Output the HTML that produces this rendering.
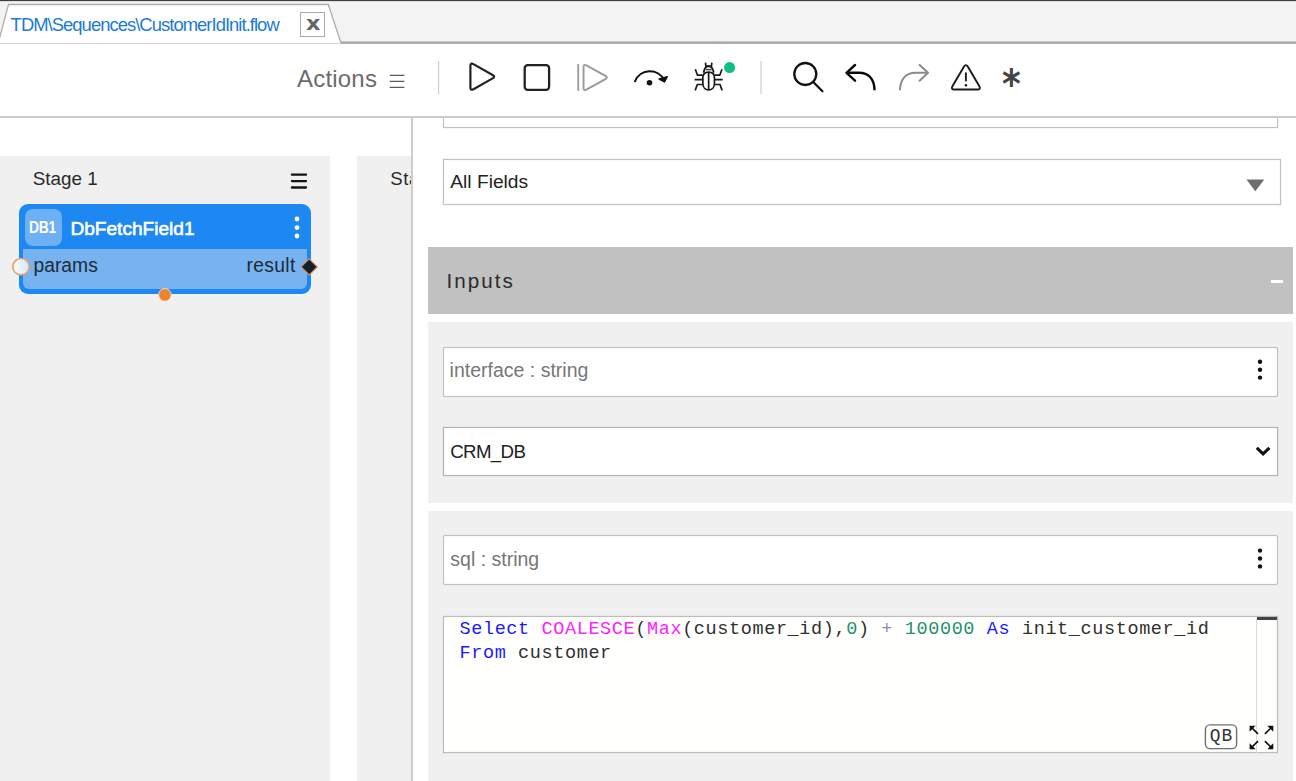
<!DOCTYPE html>
<html lang="en">
<head>
<meta charset="utf-8">
<title>TDM Sequences CustomerIdInit.flow</title>
<style>
*{box-sizing:border-box;margin:0;padding:0}
html,body{width:1296px;height:781px;overflow:hidden;background:#fff}
body{position:relative;font-family:"Liberation Sans",sans-serif;color:#222}
.abs{position:absolute}
.t{position:absolute;white-space:nowrap;line-height:1}
/* tab strip */
#topline{left:0;top:0;width:1296px;height:1px;background:#3e3e40}
#topline2{left:0;top:1px;width:1296px;height:1px;background:#dedede}
#tabbar{left:0;top:2px;width:1296px;height:41px;background:#f3f3f3}
#tabsvg{left:0;top:0}
#tabtxt{left:10.6px;top:15.8px;font-size:18.4px;color:#1a7bd7;letter-spacing:-0.95px}
#closex{left:300px;top:12px;width:25px;height:25px;border:1px solid #a9a9a9;background:#fff}
/* toolbar */
#toolbar{left:0;top:44px;width:1296px;height:73px;background:#fff}
#tbline{left:0;top:116px;width:1296px;height:2px;background:#cbcbcb;z-index:5}
#actions{left:297px;top:67px;font-size:24px;color:#6b6b6b;letter-spacing:0.2px}
#icons{left:0;top:44px}
/* left canvas */
.stage{background:#f0f0f0;top:156px;height:625px}
#stage1{left:0;width:330px}
#stage2{left:357px;width:55px}
#vdiv{left:411px;top:117px;width:2px;height:664px;background:#cdcdcd}
.stxt{font-size:18.6px;color:#2a2a2a}
#node{left:19px;top:204px;width:292px;height:89.5px;border-radius:9px;background:#1e88f2}
#nodebody{left:23px;top:249px;width:284px;height:40px;background:#76b3f0;border-radius:0 0 6px 6px}
#badge{left:25.4px;top:209.4px;width:36.5px;height:36.5px;border-radius:8px;background:#6db0f6}
#badgetxt{left:28.9px;top:220.1px;font-size:16.8px;font-weight:700;color:#fff;letter-spacing:-0.4px;transform:scaleX(0.83);transform-origin:0 0}
#nodetitle{left:70.4px;top:219px;font-size:19.1px;font-weight:400;color:#fff;-webkit-text-stroke:0.6px #fff;letter-spacing:0px}
#params{left:33.5px;top:255.6px;font-size:19.3px;color:#1f2a36}
#result{left:246.6px;top:256.2px;font-size:19.3px;color:#1f2a36;letter-spacing:0.3px}
/* right panel */
.box{background:#fff;border:1px solid #c2c2c2;box-shadow:0 0 1px rgba(0,0,0,0.22),inset 0 0 1px rgba(0,0,0,0.22)}
.sec{background:#f0f0f0;left:428px;width:865px}
#hdr{left:428px;top:247px;width:865px;height:67px;background:#c1c1c1}
#hdrtxt{left:446.4px;top:271.2px;font-size:20.6px;letter-spacing:2.05px;color:#2a2a2a}
.lbl{font-size:19.5px;color:#777}
.val{font-size:18.7px;color:#222}
.code{font-family:"Liberation Mono",monospace;font-size:18.5px;letter-spacing:0.615px;left:459.5px;white-space:pre}
.k{color:#1a1aff}.f{color:#ff22ff}.n{color:#1f9268}.o{color:#8593a1}.d{color:#303030}
</style>
</head>
<body>
<!-- TAB STRIP -->
<div class="abs" id="tabbar"></div>
<div class="abs" id="topline"></div>
<div class="abs" id="topline2"></div>
<svg class="abs" id="tabsvg" width="1296" height="46" viewBox="0 0 1296 46">
  <rect x="0" y="41.4" width="1296" height="2.6" fill="#adadad"/>
  <rect x="0" y="44" width="1296" height="1" fill="#e8e8e8"/>
  <path d="M-2.2,44.5 L8.5,4.5 L328.3,4.5 L341.5,44.5 Z" fill="#fff" stroke="#adadad" stroke-width="1.3"/>
  <rect x="0" y="43.2" width="340.8" height="1.6" fill="#cdcdcd"/>
</svg>
<div class="t" id="tabtxt">TDM\Sequences\CustomerIdInit.flow</div>
<div class="abs" id="closex"></div>
<div class="t" id="closetxt" style="left:305.5px;top:13.6px;font-family:'DejaVu Sans','Liberation Sans',sans-serif;font-weight:700;font-size:19.6px;color:#666;transform:scaleX(1.14);transform-origin:0 0">x</div>

<!-- TOOLBAR -->
<div class="abs" id="toolbar"></div>
<div class="abs" id="tbline"></div>
<div class="t" id="actions">Actions</div>
<svg class="abs" id="icons" width="1296" height="73" viewBox="0 44 1296 73" fill="none" stroke-linecap="round" stroke-linejoin="round">
  <!-- hamburger -->
  <g stroke="#5a5a5a" stroke-width="1.3" stroke-linecap="butt">
    <path d="M389.7,75.3 H404.4 M389.7,81.3 H404.4 M389.7,87.3 H404.4"/>
  </g>
  <rect x="438" y="61" width="1.2" height="33" fill="#cfcfcf"/>
  <!-- play -->
  <path d="M470.4,65.9 Q470.4,62.4 473.45,64.12 L492.59,74.93 Q495.64,76.65 492.59,78.37 L473.45,89.18 Q470.4,90.9 470.4,87.4 Z" stroke="#222" stroke-width="2.2"/>
  <!-- stop -->
  <rect x="524.7" y="65.2" width="24.4" height="24.6" rx="3" stroke="#222" stroke-width="2.3"/>
  <!-- step -->
  <path d="M578.2,64 V90.8" stroke="#9a9a9a" stroke-width="1.8" stroke-linecap="butt"/>
  <path d="M583.55,67.05 Q583.55,63.85 586.35,65.4 L605.45,75.95 Q608.25,77.5 605.45,79.05 L586.35,89.6 Q583.55,91.15 583.55,87.95 Z" stroke="#9a9a9a" stroke-width="1.9"/>
  <!-- step over -->
  <path d="M635,81.3 A16.1,16.1 0 0 1 664.4,80.4" stroke="#111" stroke-width="2"/>
  <path d="M659.2,79 L664.5,81.9 L667.2,76.6 Z" stroke="#111" stroke-width="1.5" fill="#111"/>
  <circle cx="649.5" cy="82.7" r="2.8" fill="#111"/>
  <!-- bug -->
  <g stroke="#1a1a1a" stroke-width="1.7" stroke-linecap="butt">
    <path d="M702.85,77.5 C702.85,74 704.8,72.1 708.65,72.1 C712.5,72.1 714.45,74 714.45,77.5 V83.3 C714.45,87.3 712,90 708.65,90 C705.3,90 702.85,87.3 702.85,83.3 Z"/>
    <path d="M703.6,72.6 C704.2,68.6 706,66.4 708.65,66.4 C711.3,66.4 713.1,68.6 713.7,72.6" stroke-width="1.9"/>
    <path d="M705.6,69.6 H711.7" stroke-width="1.5" stroke="#444"/>
    <path d="M708.65,72.2 V90"/>
    <path d="M705.5,62.6 L705.8,66.2 H711.5 L711.8,62.6"/>
    <path d="M702.6,75.2 H697.5 L695.3,69.2"/>
    <path d="M714.7,75.2 H719.8 L722,69.2"/>
    <path d="M694.6,79.7 H702.6 M714.7,79.7 H722.7"/>
    <path d="M702.6,84.5 H697.3 L695.2,90.4"/>
    <path d="M714.7,84.5 H720 L722.1,90.4"/>
  </g>
  <circle cx="729.6" cy="67.5" r="5.5" fill="#0cc083"/>
  <rect x="760.4" y="61" width="1.2" height="33" fill="#cfcfcf"/>
  <!-- search -->
  <circle cx="805.3" cy="74" r="11" stroke="#111" stroke-width="2.3"/>
  <path d="M813.3,82 L822.4,91.2" stroke="#111" stroke-width="2.3"/>
  <!-- undo -->
  <path d="M855,65 L846.5,72.8 L855,80.7" stroke="#0a0a0a" stroke-width="2.4"/>
  <path d="M846.8,72.8 H859 C868.5,72.8 874.5,79 874.5,90.3" stroke="#0a0a0a" stroke-width="2.4" stroke-linecap="butt"/>
  <!-- redo -->
  <path d="M919.6,65 L928,72.8 L919.6,80.7" stroke="#8a8a8a" stroke-width="2"/>
  <path d="M927.7,72.8 H915.5 C906,72.8 900,79 900,90.3" stroke="#8a8a8a" stroke-width="2" stroke-linecap="butt"/>
  <!-- warning -->
  <path d="M963.88,66.85 Q965.9,63.4 967.92,66.85 L979.23,86.1 Q981.25,89.55 977.25,89.55 L954.55,89.55 Q950.55,89.55 952.57,86.1 Z" stroke="#1a1a1a" stroke-width="1.9"/>
  <path d="M965.9,72.4 V81.3" stroke="#1a1a1a" stroke-width="1.9" stroke-linecap="butt"/>
  <circle cx="965.9" cy="85.2" r="1.25" fill="#1a1a1a"/>
</svg>
<div class="t" id="aster" style="left:1002.2px;top:64.4px;font-family:'DejaVu Sans','Liberation Sans',sans-serif;font-size:40.5px;font-weight:700;color:#444;transform:scaleX(0.885);transform-origin:0 0">*</div>

<!-- LEFT CANVAS -->
<div class="abs stage" id="stage1"></div>
<div class="abs stage" id="stage2"></div>
<div class="t stxt" style="left:32.8px;top:170px;font-size:18.85px">Stage 1</div>
<div class="abs" style="left:357px;top:156px;width:55px;height:60px;overflow:hidden"><div class="t stxt" style="left:33.2px;top:13.5px;letter-spacing:0.6px">Stage 2</div></div>
<svg class="abs" style="left:288px;top:170px" width="24" height="22" viewBox="288 170 24 22">
  <path d="M291.9,174.7 H306 M291.9,181.1 H306 M291.9,187.5 H306" stroke="#131313" stroke-width="2.3" stroke-linecap="round"/>
</svg>
<div class="abs" id="node"></div>
<div class="abs" id="nodebody"></div>
<div class="abs" id="badge"></div>
<div class="t" id="badgetxt">DB1</div>
<div class="t" id="nodetitle">DbFetchField1</div>
<div class="t" id="params">params</div>
<div class="t" id="result">result</div>
<svg class="abs" style="left:0;top:200px" width="330" height="110" viewBox="0 200 330 110">
  <defs>
    <linearGradient id="pg" x1="0" y1="0" x2="1" y2="0"><stop offset="0" stop-color="#ffffff"/><stop offset="1" stop-color="#d3e6fa"/></linearGradient>
  </defs>
  <circle cx="297" cy="219" r="2.4" fill="#fff"/>
  <circle cx="297" cy="227.6" r="2.4" fill="#fff"/>
  <circle cx="297" cy="236" r="2.4" fill="#fff"/>
  <circle cx="21" cy="266.7" r="8.2" fill="url(#pg)" stroke="#eaa066" stroke-width="1.7"/>
  <path d="M309.2,258.8 L317.3,266.9 L309.2,275 L301.1,266.9 Z" fill="#13202f" stroke="#dd9257" stroke-width="1.1"/>
  <circle cx="164.9" cy="294.9" r="6.3" fill="#ee842e" stroke="#f6e3d3" stroke-width="0.9"/>
</svg>
<div class="abs" id="vdiv"></div>

<!-- RIGHT PANEL -->
<div class="abs box" style="left:443px;top:100px;width:835px;height:28px"></div>
<div class="abs" style="left:420px;top:96px;width:876px;height:20.5px;background:#fff"></div>
<div class="abs box" style="left:443px;top:159px;width:838px;height:45.5px"></div>
<div class="t val" style="left:450.3px;top:172.2px;font-size:19.2px">All Fields</div>
<svg class="abs" style="left:1244px;top:177px" width="24" height="16" viewBox="1244 177 24 16"><path d="M1246.4,179.6 H1264.3 L1255.35,191.2 Z" fill="#6e6e6e"/></svg>

<div class="abs" id="hdr"></div>
<div class="t" id="hdrtxt">Inputs</div>
<div class="abs" style="left:1270.5px;top:280.3px;width:12.3px;height:2.6px;background:#fff"></div>

<div class="abs sec" style="top:322px;height:181.3px"></div>
<div class="abs box" style="left:443px;top:347px;width:834.8px;height:50px;border-radius:2px"></div>
<div class="t lbl" style="left:449.6px;top:361.3px">interface : string</div>
<div class="abs box" style="left:443px;top:427.3px;width:834.8px;height:48.6px;border-color:#b3b3b3"></div>
<div class="t val" style="left:450.2px;top:443px;letter-spacing:-0.65px">CRM_DB</div>
<svg class="abs" style="left:1250px;top:440px" width="26" height="22" viewBox="1250 440 26 22"><path d="M1256.8,447.8 L1263.1,453.9 L1269.4,447.8" fill="none" stroke="#111" stroke-width="3"/></svg>
<svg class="abs" style="left:1254px;top:355px" width="12" height="30" viewBox="1254 355 12 30"><circle cx="1260" cy="361.8" r="2.2" fill="#111"/><circle cx="1260" cy="369.7" r="2.2" fill="#111"/><circle cx="1260" cy="377.6" r="2.2" fill="#111"/></svg>

<div class="abs sec" style="top:511.3px;height:269.7px"></div>
<div class="abs box" style="left:443px;top:535.3px;width:834.8px;height:49.8px;border-radius:2px"></div>
<div class="t lbl" style="left:450.3px;top:550.4px">sql : string</div>
<svg class="abs" style="left:1254px;top:544px" width="12" height="30" viewBox="1254 544 12 30"><circle cx="1260" cy="550.6" r="2.2" fill="#111"/><circle cx="1260" cy="558.5" r="2.2" fill="#111"/><circle cx="1260" cy="566.4" r="2.2" fill="#111"/></svg>

<div class="abs box" style="left:442.6px;top:616.4px;width:835.2px;height:137px;background:#fffffe;border-color:#bdbdbd"></div>
<div class="abs" style="left:1256px;top:617.5px;width:1px;height:135px;background:#dcdcdc"></div>
<div class="abs" style="left:1256.5px;top:617.4px;width:20.5px;height:2.7px;background:#444"></div>
<div class="t code" style="top:620.6px"><span class="k">Select</span> <span class="f">COALESCE</span><span class="d">(</span><span class="f">Max</span><span class="d">(customer_id),</span><span class="n">0</span><span class="d">)</span> <span class="o">+</span> <span class="n">100000</span> <span class="k">As</span> <span class="d">init_customer_id</span></div>
<div class="t code" style="top:644.6px"><span class="k">From</span> <span class="d">customer</span></div>
<svg class="abs" style="left:1200px;top:720px" width="42" height="34" viewBox="1200 720 42 34"><rect x="1205.4" y="724.9" width="31.2" height="23.7" rx="4.6" fill="#fff" stroke="#6e6e6e" stroke-width="1.4"/></svg>
<div class="t" style="left:1209.7px;top:728.3px;font-family:'Liberation Mono',monospace;font-size:17.9px;letter-spacing:1.2px;color:#333">QB</div>
<svg class="abs" style="left:1247px;top:723px" width="30" height="30" viewBox="1247 723 30 30" fill="none" stroke="#111" stroke-width="1.7">
  <path d="M1258,733.8 L1251.5,727.5 M1264.9,733.8 L1271.4,727.5 M1258,741.2 L1251.5,747.5 M1264.9,741.2 L1271.4,747.5"/>
  <g fill="#111" stroke="none">
    <path d="M1249.6,725.8 H1255.6 L1249.6,731.8 Z"/>
    <path d="M1273.3,725.8 H1267.3 L1273.3,731.8 Z"/>
    <path d="M1249.6,749.2 H1255.6 L1249.6,743.2 Z"/>
    <path d="M1273.3,749.2 H1267.3 L1273.3,743.2 Z"/>
  </g>
</svg>
</body>
</html>
